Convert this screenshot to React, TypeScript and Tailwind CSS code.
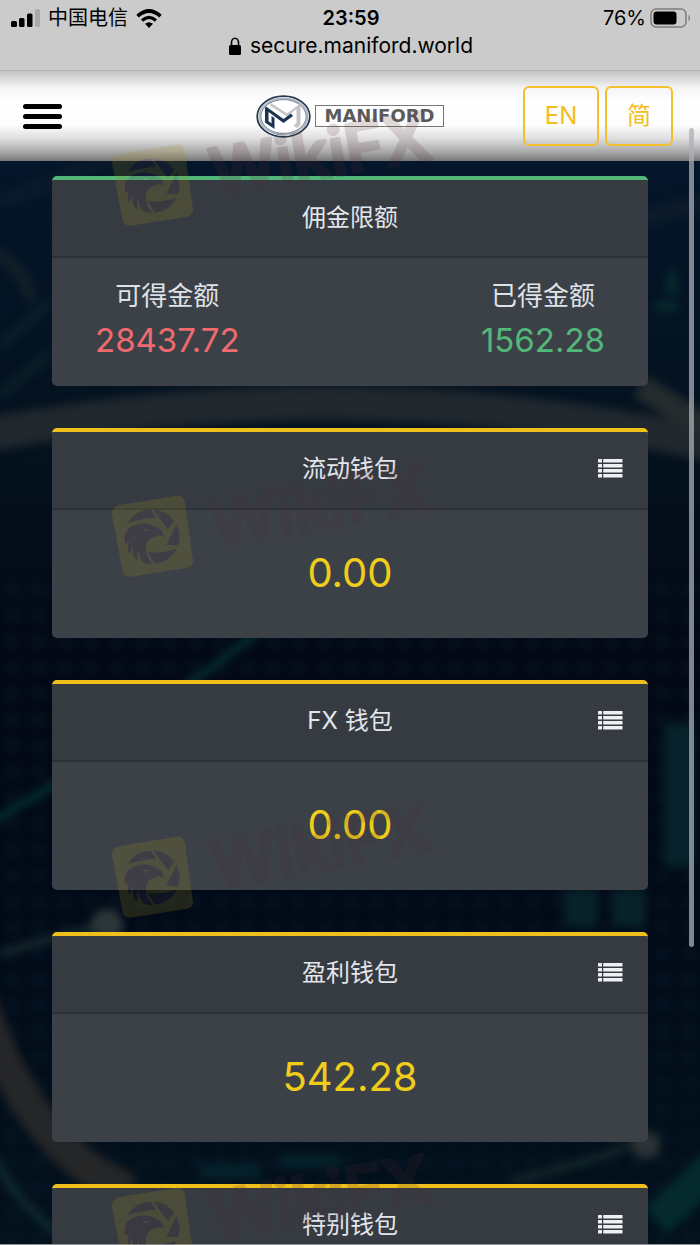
import React from "react";

const wallets = [
  { name: "流动钱包", amount: "0.00" },
  { name: "FX 钱包", amount: "0.00" },
  { name: "盈利钱包", amount: "542.28" },
  { name: "特别钱包", amount: "0.00" },
];

const eagleMark =
  "M60 93A82 82 0 0 1 128 53L144 77Q100 79 60 93Z" +
  "M136 53A82 82 0 0 1 198 86L180 111Z" +
  "M205 96A82 82 0 0 1 210 160L176 158Z" +
  "M205 171A82 82 0 0 1 141 215L119 181Q160 185 205 171Z" +
  "M51 128Q60 104 90 97Q120 90 140 103Q162 108 168 134Q150 126 140 134Q118 138 114 160Q110 188 132 216Q118 215 107 212Q92 195 91 172Q84 190 90 205L80 199Q70 180 76 162Q64 174 66 186L60 176Q57 160 66 146L52 156Q49 142 51 128Z";

const eagleEye = "M106 114Q118 120 128 111Q117 114 104 109Z";

function Watermark() {
  return (
    <svg viewBox="0 0 340 130" className="h-[130px] w-[340px]" aria-hidden="true">
      <g transform="translate(3 34) scale(.3333)">
        <path
          fill="#a08a20"
          fillOpacity=".2"
          fillRule="evenodd"
          d={
            "M35 39L205 11Q225 9 230 28L255 205Q257 222 238 227L68 254Q49 256 44 238L12 68Q10 46 35 39Z" +
            eagleMark +
            eagleEye
          }
        />
        <path fill="#4a3248" fillOpacity=".2" fillRule="evenodd" d={eagleMark + eagleEye} />
      </g>
      <g opacity=".17">
        <text
          transform="translate(110 90) rotate(-10)"
          fontFamily="Inter, sans-serif"
          fontWeight="500"
          fontSize="66"
          fill="#532d34"
          stroke="#532d34"
          strokeWidth="4"
          strokeLinejoin="round"
        >
          WikiFX
        </text>
      </g>
    </svg>
  );
}

function Backdrop() {
  return (
    <svg
      viewBox="0 0 700 1084"
      preserveAspectRatio="xMidYMin slice"
      className="absolute inset-0 h-full w-full"
      aria-hidden="true"
    >
      <defs>
        <linearGradient id="sky" x1="0" y1="0" x2="0" y2="1">
          <stop offset="0" stopColor="#04162a" />
          <stop offset=".25" stopColor="#04121f" />
          <stop offset=".45" stopColor="#030814" />
          <stop offset=".7" stopColor="#020a17" />
          <stop offset="1" stopColor="#03111c" />
        </linearGradient>
        <pattern id="dots" width="26" height="26" patternUnits="userSpaceOnUse">
          <rect width="16" height="16" x="5" y="5" fill="#071c2d" opacity=".35" />
        </pattern>
        <filter id="soft" colorInterpolationFilters="sRGB">
          <feGaussianBlur stdDeviation="4" />
        </filter>
      </defs>
      <rect width="700" height="1084" fill="url(#sky)" />
      <g filter="url(#soft)">
        <rect y="420" width="700" height="664" fill="url(#dots)" />
        <path d="M-20 275Q350 205 720 285" stroke="#20282e" strokeWidth="34" fill="none" />
        <path d="M640 60Q690 40 720 46" stroke="#0c1b2a" strokeWidth="18" fill="none" />
        <path d="M0 40Q60 20 120 -10" stroke="#0b1a2a" strokeWidth="16" fill="none" />
        <path d="M-10 90Q20 100 32 140" stroke="#141f27" strokeWidth="12" fill="none" />
        <path d="M640 225L720 275" stroke="#252c2e" strokeWidth="24" />
        <path d="M52 140L0 185M52 190L0 235" stroke="#0b1e28" strokeWidth="10" fill="none" />
        <path d="M655 145h22M672 110v24" stroke="#082a2c" strokeWidth="10" />
        <path d="M-10 662L60 620L260 470" stroke="#04302f" strokeWidth="7" fill="none" />
        <path d="M0 792L110 762" stroke="#1a2e31" strokeWidth="6" />
        <circle cx="107" cy="764" r="16" fill="#2c3639" />
        <rect x="664" y="562" width="30" height="144" fill="#06222a" />
        <rect x="564" y="728" width="34" height="38" fill="#082229" />
        <rect x="612" y="728" width="34" height="38" fill="#082229" />
        <path d="M-20 840Q30 990 130 1030" stroke="#252627" strokeWidth="34" fill="none" />
        <path d="M-10 990Q20 1050 70 1080" stroke="#102a30" strokeWidth="8" fill="none" />
        <path d="M510 1020Q600 1000 650 975" stroke="#172a2c" strokeWidth="6" fill="none" />
        <circle cx="646" cy="984" r="14" fill="#2c3235" />
        <path d="M656 1060L720 1000" stroke="#042a2e" strokeWidth="34" />
        <path d="M200 1010h60M280 1000h60" stroke="#06222b" strokeWidth="14" />
      </g>
    </svg>
  );
}

function StatusBar() {
  return (
    <div className="border-b border-[#b3b3b3] bg-[#cbcbcb] pt-[6px] pr-[9px] pb-[9px] pl-[11px] text-black">
      <div className="grid grid-cols-[1fr_auto_1fr] items-center leading-6">
        <div className="flex items-center gap-2">
          <svg viewBox="0 0 29 18" className="h-[18px] w-[29px]" aria-label="信号">
            <rect x="0" y="12" width="6" height="6" rx="1.5" />
            <rect x="8" y="9" width="5.5" height="9" rx="1.5" />
            <rect x="16" y="4.500" width="5.500" height="13.500" rx="1.500" />
            <rect x="24" y="0" width="5" height="18" rx="1.500" fill="#aaa" />
          </svg>
          <span className="text-[20px]">中国电信</span>
          <svg viewBox="0 0 26 19" className="h-[19px] w-[26px]" aria-label="Wi-Fi" fill="none" stroke="#000">
            <path d="M1.500 7.200Q13 -3.200 24.500 7.200" strokeWidth="3.600" />
            <path d="M6 11.500Q13 5.300 20 11.500" strokeWidth="3.300" />
            <path d="M13 19l-4-4.300q4-3 8 0z" fill="#000" stroke="none" />
          </svg>
        </div>
        <span className="text-[20px] font-semibold">23:59</span>
        <div className="flex items-center justify-end gap-1">
          <span className="text-[20px]">76%</span>
          <svg viewBox="0 0 41 20" className="h-5 w-[41px]" aria-label="电池">
            <rect x="1" y="1" width="35" height="18" rx="5" fill="none" stroke="#7d7d7d" strokeWidth="1.500" />
            <rect x="3.500" y="3.500" width="23" height="13" rx="3" />
            <path d="M38.500 6.500q3 3.500 0 7z" fill="#7d7d7d" />
          </svg>
        </div>
      </div>
      <div className="flex items-center justify-center gap-[9px] leading-[31px]">
        <svg viewBox="0 0 12 18" className="h-[18px] w-3" aria-label="安全">
          <rect x="0" y="8" width="12" height="10" rx="1.500" />
          <path d="M2.500 9V5.500a3.500 4.300 0 0 1 7 0V9" fill="none" stroke="#000" strokeWidth="1.600" />
        </svg>
        <span className="text-[21px]">secure.maniford.world</span>
      </div>
    </div>
  );
}

function Logo() {
  return (
    <a href="#home" className="flex items-center gap-1" aria-label="Maniford">
      <svg viewBox="0 0 55 43" className="h-[43px] w-[55px]" aria-hidden="true">
        <ellipse cx="27.500" cy="21.500" rx="26.300" ry="20.300" fill="#fff" stroke="#26384f" strokeWidth="1.800" />
        <ellipse cx="27.500" cy="21.500" rx="24" ry="18.200" fill="none" stroke="#a9b6c3" strokeWidth="1.800" />
        <ellipse cx="27.500" cy="21.500" rx="22.600" ry="16.900" fill="none" stroke="#44566a" strokeWidth=".7" />
        <path d="M15 8L31 18.500L44.500 8.500V30L41 33L37.500 30.500L40.500 28V14L31 21.500L14 10.500Z" fill="#c3c2c5" />
        <path
          d="M10 11.500L27.500 24L35 18.500L37 21L27.500 28L12.500 17V26L15.500 28.500V21L18.500 23V34L9 27.500V13Z"
          fill="#1b3450"
        />
      </svg>
      <span className="border border-[#777] px-2 font-['DejaVu_Sans',sans-serif] text-[18px] leading-5 font-bold text-[#5c5a5b]">
        MANIFORD
      </span>
    </a>
  );
}

function NavBar() {
  const language =
    "h-[60px] rounded-[6px] border-2 border-[#f3c02c] text-[24px] font-normal text-[#f3bd20]";
  return (
    <header className="grid grid-cols-[1fr_auto_1fr] items-center bg-[linear-gradient(#c4c4c4,#f6f6f6_20%,#fff_35%,#fdfdfd_60%,#dedede_75%,#a8a8a8_90%,#777)] px-[23px] py-[15px]">
      <button type="button" aria-label="菜单" className="flex w-[39px] flex-col gap-[5px]">
        <span className="h-[5px] rounded-full bg-black" />
        <span className="h-[5px] rounded-full bg-black" />
        <span className="h-[5px] rounded-full bg-black" />
      </button>
      <Logo />
      <div className="flex justify-end gap-[6px] pr-1">
        <button type="button" className={language + " w-[76px]"}>EN</button>
        <button type="button" className={language + " w-[68px]"}>简</button>
      </div>
    </header>
  );
}

function ListIcon() {
  return (
    <svg viewBox="0 0 25 20" className="h-5 w-[25px]" fill="#eef0f4" aria-hidden="true">
      {[0, 5, 10, 15].map((y) => (
        <React.Fragment key={y}>
          <rect x="0" y={y + 1} width="4" height="3.600" rx=".5" />
          <rect x="5.200" y={y + 1} width="19.300" height="3.600" rx=".5" />
        </React.Fragment>
      ))}
    </svg>
  );
}

function CommissionCard() {
  return (
    <section className="shrink-0 overflow-hidden rounded-[5px] border-t-4 border-[#52b87a] bg-[#3c4148]">
      <h2 className="border-b-2 border-[#2b3037] bg-[#363b42] py-[19px] text-center text-[24px] leading-[38px] text-[#e3e6ea]">
        佣金限额
      </h2>
      <dl className="flex h-[128px] justify-between px-[43px] pt-[19px] text-center">
        <div>
          <dt className="text-[26px] leading-[38px] text-[#dfe2e6]">可得金额</dt>
          <dd className="text-[33px] leading-[50px] text-[#ee6a6e]">28437.72</dd>
        </div>
        <div>
          <dt className="text-[26px] leading-[38px] text-[#dfe2e6]">已得金额</dt>
          <dd className="text-[33px] leading-[50px] text-[#52b87a]">1562.28</dd>
        </div>
      </dl>
    </section>
  );
}

function WalletCard({ name, amount }: { name: string; amount: string }) {
  return (
    <section className="shrink-0 overflow-hidden rounded-[5px] border-t-4 border-[#efc01c] bg-[#3c4148]">
      <div className="grid grid-cols-[1fr_auto_1fr] items-center border-b-2 border-[#2b3037] bg-[#363b42] px-[25px] pt-[18px] pb-5">
        <h2 className="col-start-2 text-[24px] leading-[38px] text-[#e3e6ea]">{name}</h2>
        <button type="button" aria-label={name + " 明细"} className="mb-[3px] justify-self-end">
          <ListIcon />
        </button>
      </div>
      <p className="h-[128px] text-center text-[40px] leading-[125px] text-[#f0cd1a]">{amount}</p>
    </section>
  );
}

export default function App() {
  return (
    <div className="relative flex h-screen flex-col overflow-hidden bg-[#030a16] font-[Inter,'Noto_Sans_CJK_SC',sans-serif]">
      <StatusBar />
      <NavBar />
      <main className="relative min-h-0 flex-1 overflow-hidden border-b border-[#8d9299]">
        <Backdrop />
        <div className="relative flex h-full flex-col gap-[42px] overflow-y-auto px-[52px] pt-[15px] [scrollbar-width:none]">
          <CommissionCard />
          {wallets.map((wallet) => (
            <WalletCard key={wallet.name} name={wallet.name} amount={wallet.amount} />
          ))}
        </div>
      </main>
      <div className="pointer-events-none absolute top-[128px] right-[6px] h-[819px] w-[5px] rounded-full bg-[#a9afb8]/75" />
      <div className="pointer-events-none absolute top-[107px] left-[105px] flex flex-col gap-[211px]">
        <div className="flex flex-col gap-[221px]">
          <Watermark />
          <Watermark />
        </div>
        <div className="flex flex-col gap-[221px]">
          <Watermark />
          <Watermark />
        </div>
      </div>
    </div>
  );
}
